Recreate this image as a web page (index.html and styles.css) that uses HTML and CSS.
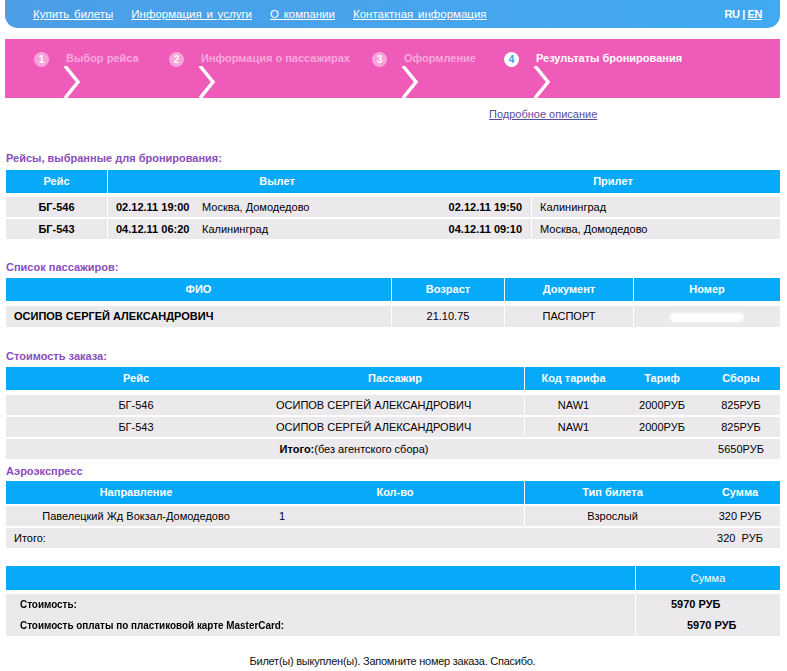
FILE: index.html
```html
<!DOCTYPE html>
<html lang="ru">
<head>
<meta charset="utf-8">
<title>Результаты бронирования</title>
<link rel="stylesheet" href="styles.css">
</head>
<body>
<div class="page">
  <nav class="topnav">
    <div class="links">
      <a href="#">Купить билеты</a>
      <a href="#">Информация и услуги</a>
      <a href="#">О компании</a>
      <a href="#">Контактная информация</a>
    </div>
    <div class="lang">RU | <a href="#">EN</a></div>
  </nav>

  <div class="steps">
    <div class="step">
      <div class="head"><span class="num">1</span><span class="label">Выбор рейса</span></div>
      <svg class="chev" viewBox="0 0 18 32" width="18" height="32"><polyline points="2,0 15,16 2,32" /></svg>
    </div>
    <div class="step">
      <div class="head"><span class="num">2</span><span class="label">Информация о пассажирах</span></div>
      <svg class="chev" viewBox="0 0 18 32" width="18" height="32"><polyline points="2,0 15,16 2,32" /></svg>
    </div>
    <div class="step">
      <div class="head"><span class="num">3</span><span class="label">Оформление</span></div>
      <svg class="chev" viewBox="0 0 18 32" width="18" height="32"><polyline points="2,0 15,16 2,32" /></svg>
    </div>
    <div class="step active">
      <div class="head"><span class="num">4</span><span class="label">Результаты бронирования</span></div>
      <svg class="chev" viewBox="0 0 18 32" width="18" height="32"><polyline points="2,0 15,16 2,32" /></svg>
    </div>
  </div>

  <div class="more"><a href="#">Подробное описание</a></div>

  <h2 class="sec sec1">Рейсы, выбранные для бронирования:</h2>
  <table class="grid t1">
    <colgroup><col style="width:101px"><col style="width:87px"><col style="width:252px"><col style="width:85px"><col></colgroup>
    <thead>
      <tr><th>Рейс</th><th class="vl" colspan="2">Вылет</th><th colspan="2">Прилет</th></tr>
    </thead>
    <tbody>
      <tr><td class="c b">БГ-546</td><td class="vl b pl8">02.12.11 19:00</td><td class="pl8">Москва, Домодедово</td><td class="r b pr9">02.12.11 19:50</td><td class="vl pl8">Калининград</td></tr>
      <tr><td class="c b">БГ-543</td><td class="vl b pl8">04.12.11 06:20</td><td class="pl8">Калининград</td><td class="r b pr9">04.12.11 09:10</td><td class="vl pl8">Москва, Домодедово</td></tr>
    </tbody>
  </table>

  <h2 class="sec sec2">Список пассажиров:</h2>
  <table class="grid t2">
    <colgroup><col style="width:385px"><col style="width:113px"><col style="width:129px"><col></colgroup>
    <thead>
      <tr><th>ФИО</th><th class="vl">Возраст</th><th class="vl">Документ</th><th class="vl">Номер</th></tr>
    </thead>
    <tbody>
      <tr><td class="b pl8">ОСИПОВ СЕРГЕЙ АЛЕКСАНДРОВИЧ</td><td class="vl c">21.10.75</td><td class="vl c">ПАСПОРТ</td><td class="vl c"><span class="hidden-num"></span></td></tr>
    </tbody>
  </table>

  <h2 class="sec sec3">Стоимость заказа:</h2>
  <table class="grid t3">
    <colgroup><col style="width:260px"><col style="width:258px"><col style="width:98px"><col style="width:80px"><col></colgroup>
    <thead>
      <tr><th>Рейс</th><th>Пассажир</th><th class="vl">Код тарифа</th><th>Тариф</th><th>Сборы</th></tr>
    </thead>
    <tbody>
      <tr><td class="c">БГ-546</td><td class="pl10">ОСИПОВ СЕРГЕЙ АЛЕКСАНДРОВИЧ</td><td class="vl c">NAW1</td><td class="c">2000РУБ</td><td class="c">825РУБ</td></tr>
      <tr><td class="c">БГ-543</td><td class="pl10">ОСИПОВ СЕРГЕЙ АЛЕКСАНДРОВИЧ</td><td class="vl c">NAW1</td><td class="c">2000РУБ</td><td class="c">825РУБ</td></tr>
      <tr><td class="c" colspan="4"><b>Итого:</b>(без агентского сбора)</td><td class="c">5650РУБ</td></tr>
    </tbody>
  </table>

  <h2 class="sec sec4">Аэроэкспресс</h2>
  <table class="grid t4">
    <colgroup><col style="width:260px"><col style="width:258px"><col style="width:176px"><col></colgroup>
    <thead>
      <tr><th>Направление</th><th>Кол-во</th><th class="vl">Тип билета</th><th>Сумма</th></tr>
    </thead>
    <tbody>
      <tr><td class="c">Павелецкий Жд Вокзал-Домодедово</td><td class="pl13">1</td><td class="vl c">Взрослый</td><td class="c">320 РУБ</td></tr>
      <tr><td class="pl8" colspan="3">Итого:</td><td class="c">320&nbsp; РУБ</td></tr>
    </tbody>
  </table>

  <table class="grid t5">
    <colgroup><col style="width:629px"><col></colgroup>
    <thead>
      <tr><th></th><th class="vl">Сумма</th></tr>
    </thead>
    <tbody>
      <tr><td class="pl14"><span class="narrow">Стоимость:</span></td><td class="vl v1">5970 РУБ</td></tr>
      <tr><td class="pl14"><span class="narrow">Стоимость оплаты по пластиковой карте MasterCard:</span></td><td class="vl v2">5970 РУБ</td></tr>
    </tbody>
  </table>

  <p class="note">Билет(ы) выкуплен(ы). Запомните номер заказа. Спасибо.</p>
</div>
</body>
</html>
```

FILE: styles.css
```css
html, body {
  margin: 0;
  padding: 0;
  background: #ffffff;
}

body {
  font-family: "Liberation Sans", Arial, sans-serif;
  font-size: 11px;
  color: #000;
}

.page {
  width: 775px;
  margin-left: 5px;
}

/* top navigation */
.topnav {
  height: 28px;
  display: flex;
  align-items: center;
  justify-content: space-between;
  background: linear-gradient(to right, #4c9ee7, #40aaf2);
  border-radius: 0 0 13px 13px;
  padding: 0 18px 0 28px;
  font-size: 11.5px;
  color: #fff;
}

.topnav .links {
  display: flex;
  gap: 18px;
}

.topnav .links a {
  color: #fff;
  text-decoration: underline;
  word-spacing: 1.5px;
}

.lang {
  font-size: 11px;
  font-weight: bold;
  letter-spacing: -0.4px;
  color: #fff;
}

.lang a {
  color: #fff;
  text-decoration: underline;
}

/* steps */
.steps {
  margin-top: 11px;
  height: 59px;
  background: #ef5bb9;
  display: grid;
  grid-template-columns: 135px 203px 132px 1fr;
  padding-left: 29px;
  overflow: hidden;
}

.step {
  display: flex;
  flex-direction: column;
  padding-top: 13px;
}

.step .head {
  display: flex;
  align-items: flex-start;
  gap: 17px;
  height: 14px;
}

.step .num {
  width: 15px;
  height: 15px;
  border-radius: 50%;
  background: #f8a4da;
  color: #fff;
  font-weight: bold;
  font-size: 10px;
  line-height: 15px;
  text-align: center;
  flex: none;
}

.step .label {
  font-weight: bold;
  font-size: 11px;
  color: #f9a9dc;
  line-height: 13px;
  white-space: nowrap;
}

.step.active .num {
  background: #fff;
  color: #3d9fe6;
}

.step.active .label {
  color: #fff;
}

.chev {
  margin-left: 29px;
  display: block;
}

.chev polyline {
  fill: none;
  stroke: #fff;
  stroke-width: 3.5;
}

/* link */
.more {
  margin-top: 9px;
  padding-left: 484px;
  line-height: 14px;
}

.more a {
  color: #5a4c9c;
  text-decoration: underline;
}

/* section titles */
.sec {
  margin: 0;
  font-size: 11px;
  font-weight: bold;
  color: #8a4dbb;
  line-height: 14px;
  padding-left: 1px;
}

.sec1 { margin-top: 30px; margin-bottom: 5px; }
.sec2 { margin-top: 21px; margin-bottom: 4px; }
.sec3 { margin-top: 22px; margin-bottom: 4px; }
.sec4 { margin-top: 5px; margin-bottom: 3px; }

/* tables */
.grid {
  width: 774px;
  margin-left: 1px;
  border-collapse: separate;
  border-spacing: 0;
  table-layout: fixed;
  font-size: 11px;
}

.grid th {
  background: #07a9f9;
  color: #fff;
  font-weight: bold;
  line-height: 23px;
  padding: 0;
  text-align: center;
}

.grid td {
  background: #ece9ec;
  line-height: 20px;
  padding: 0;
  border-top: 2px solid #fff;
  white-space: nowrap;
}

.t1 tbody tr:first-child td { border-top-width: 4px; }
.t2 tbody tr:first-child td { border-top-width: 5px; line-height: 21px; }
.t3 tbody tr:first-child td { border-top-width: 5px; }
.t4 tbody tr:first-child td { border-top-width: 2px; }

.grid .vl { border-left: 1px solid #fff; }

.c { text-align: center; }
.r { text-align: right; }
.b { font-weight: bold; }
.pl8 { padding-left: 8px !important; }
.pl10 { padding-left: 10px !important; }
.pl13 { padding-left: 13px !important; }
.pl14 { padding-left: 14px !important; }
.pr9 { padding-right: 9px !important; }

.hidden-num {
  display: inline-block;
  width: 74px;
  height: 9px;
  background: #fff;
  border-radius: 5px;
  vertical-align: middle;
  filter: blur(1px);
}

/* summary table */
.t5 {
  margin-top: 18px;
}

.t5 th {
  line-height: 24px;
  font-weight: normal;
}

.t5 td {
  font-weight: bold;
  line-height: 21px;
}

.t5 .narrow {
  display: inline-block;
  transform: scaleX(0.9);
  transform-origin: left center;
}

.t5 tbody tr:first-child td { border-top-width: 4px; }
.t5 tbody tr + tr td { border-top-width: 0; }

.t5 .v1 { padding-left: 35px; }
.t5 .v2 { padding-left: 51px; }

.note {
  margin: 18px 0 0;
  text-align: center;
  line-height: 14px;
  font-size: 11px;
  letter-spacing: -0.25px;
  color: #111;
}
```
